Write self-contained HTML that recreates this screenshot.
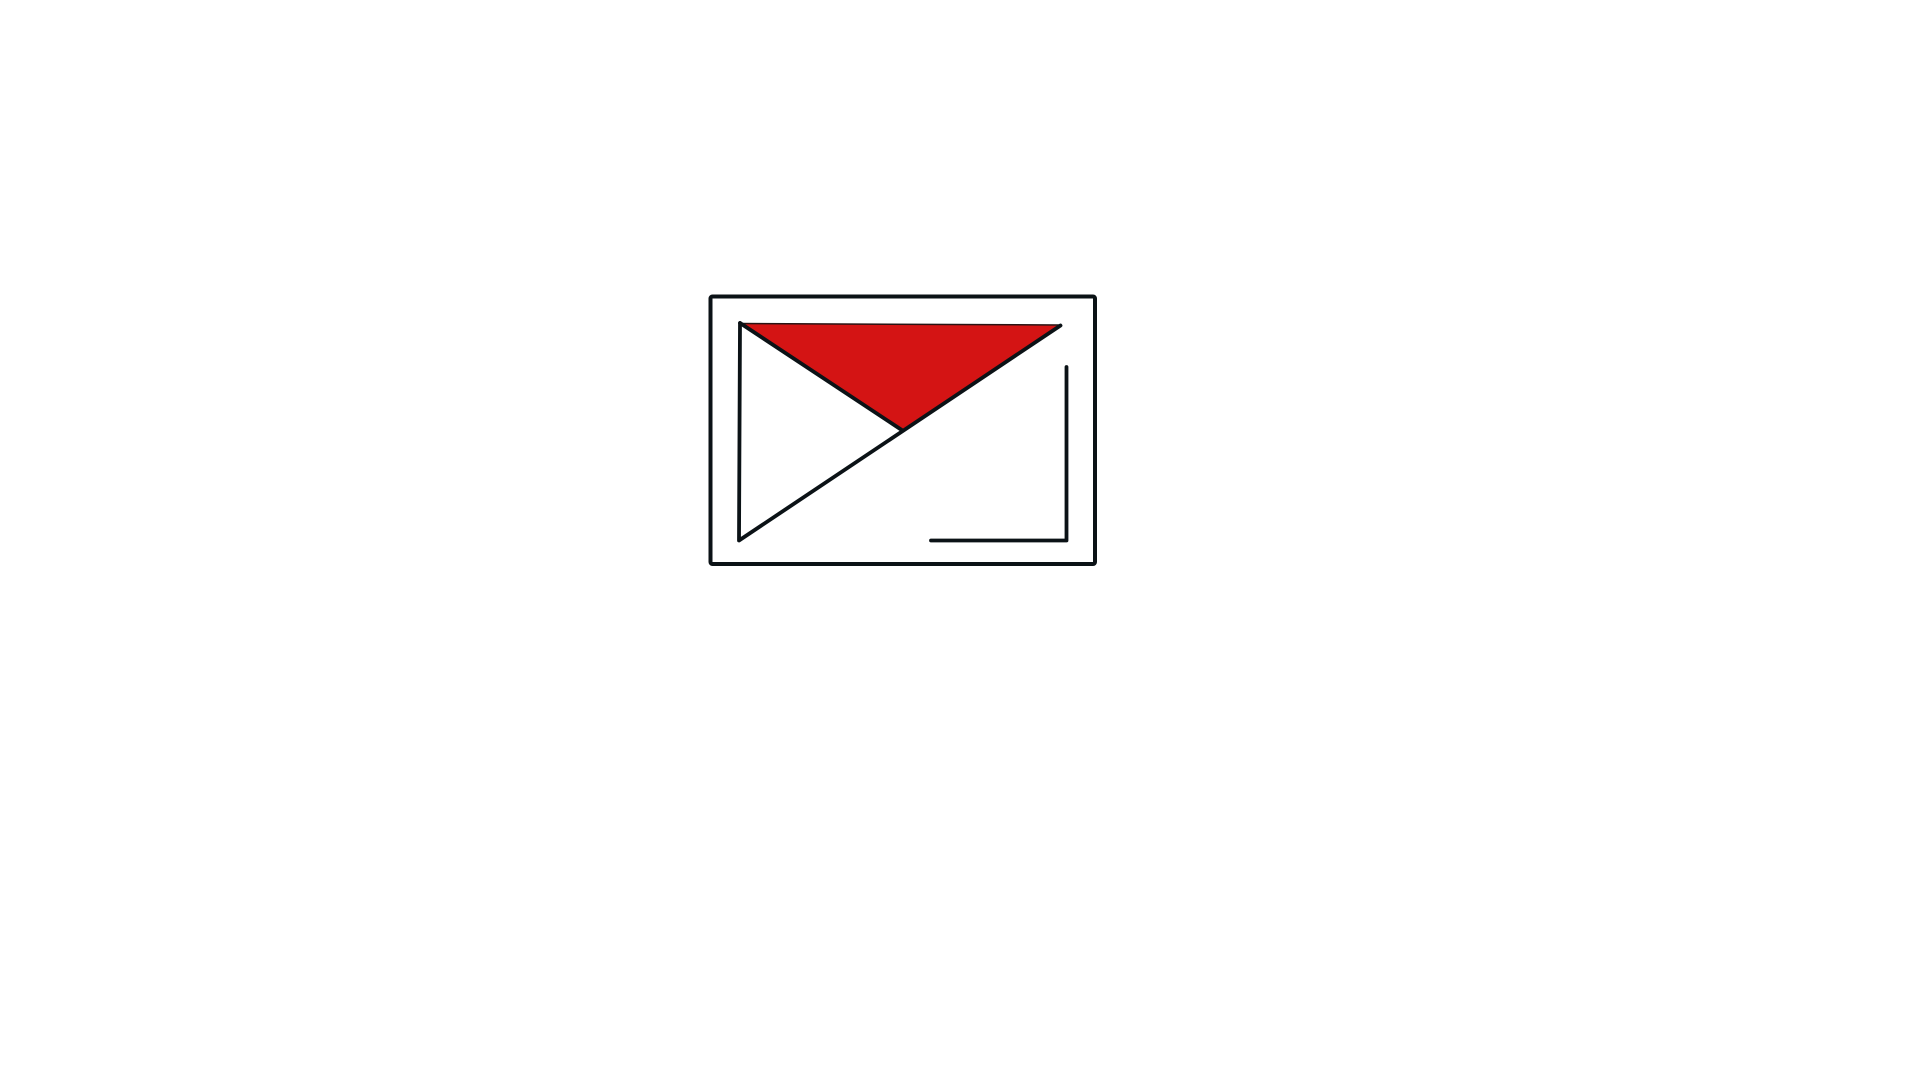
<!DOCTYPE html>
<html><head><meta charset="utf-8"><style>html,body{margin:0;padding:0;background:#fff;width:1920px;height:1080px;overflow:hidden}</style></head>
<body>
<svg width="1920" height="1080" viewBox="0 0 1920 1080" style="display:block">
<rect x="710.5" y="296.5" width="384.5" height="267.5" rx="2" fill="none" stroke="#0b1216" stroke-width="4"/>
<polygon points="740,323 1060.5,325.5 902.5,430.5" fill="#d41414"/>
<path d="M740,323.5 L1060.5,325" fill="none" stroke="#2a1414" stroke-width="1.5"/>
<g fill="none" stroke="#0b1216" stroke-width="3.8" stroke-linecap="round" stroke-linejoin="round">
<path d="M740,323 L902.5,430.5"/>
<path d="M740,323 L739,540.5 L1060.5,325.5"/>
<path d="M1066.5,367 L1066.5,540.5 L931,540.5"/>
</g>
</svg>
</body></html>
